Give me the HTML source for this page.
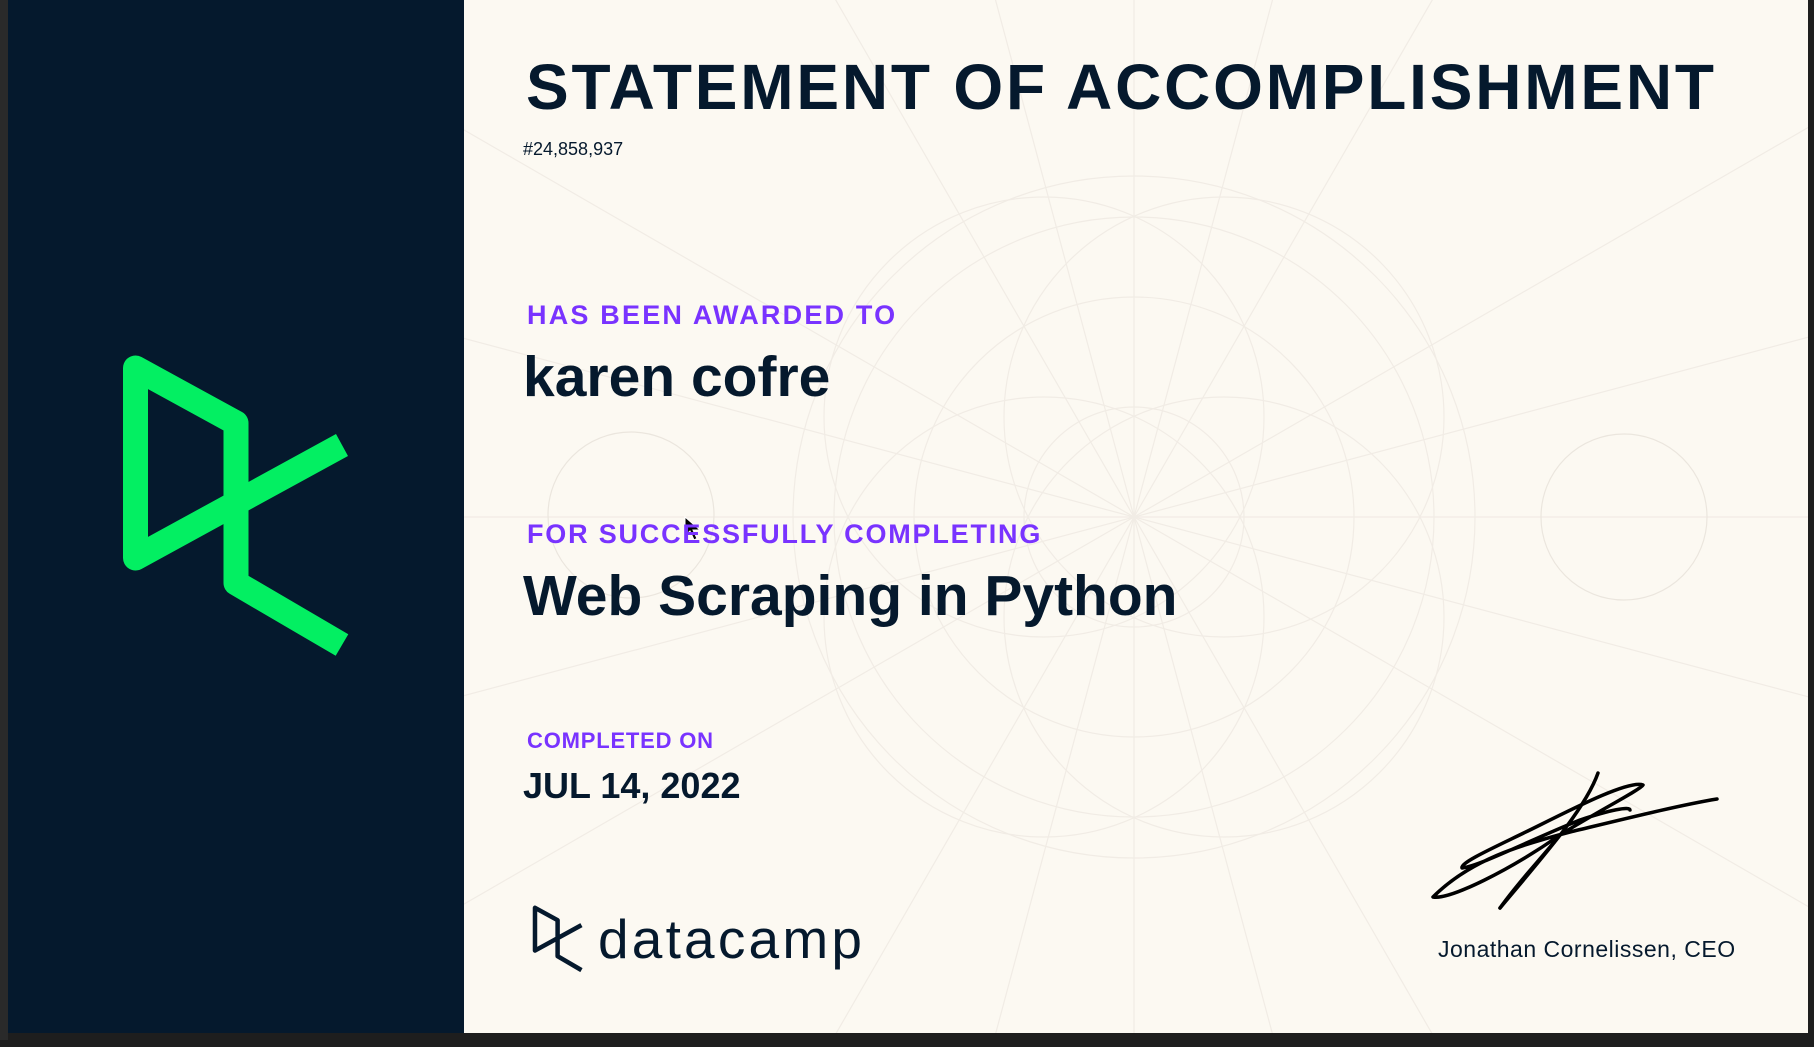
<!DOCTYPE html>
<html><head><meta charset="utf-8"><style>
*{margin:0;padding:0;box-sizing:border-box}
html,body{width:1814px;height:1047px;overflow:hidden}
body{background:#1e1e1e;position:relative;font-family:"Liberation Sans",sans-serif;color:#05192d}
.t{position:absolute;line-height:1;white-space:nowrap}
.b{font-weight:bold}
.p{color:#7933ff;font-weight:bold}
</style></head><body>
<div style="position:absolute;left:0;top:0;width:8px;height:1040px;background:#2a2a2a"></div>
<div style="position:absolute;left:8px;top:0;width:456px;height:1033px;background:#05192d"></div>
<div style="position:absolute;left:464px;top:0;width:1344px;height:1033px;background:#fcf9f2;overflow:hidden">
<svg width="1344" height="1033" style="position:absolute;left:0;top:0" fill="none" stroke="#f1ece5" stroke-width="1.2">
<g transform="translate(670,517)">
<circle r="341"/><circle r="300"/><circle cx="-90" cy="-100" r="220"/><circle cx="90" cy="-100" r="220"/><circle cx="-90" cy="100" r="220"/><circle cx="90" cy="100" r="220"/>
<circle r="220"/><circle r="110"/>
<g>
<line x1="-900" y1="0" x2="900" y2="0"/><line x1="0" y1="-600" x2="0" y2="600"/>
<line x1="-900" y1="-520" x2="900" y2="520"/>
<line x1="-900" y1="520" x2="900" y2="-520"/><line x1="-300" y1="-520" x2="300" y2="520"/><line x1="-300" y1="520" x2="300" y2="-520"/>
<line x1="-150" y1="-560" x2="150" y2="560"/><line x1="-150" y1="560" x2="150" y2="-560"/>
<line x1="-900" y1="-240" x2="900" y2="240"/><line x1="-900" y1="240" x2="900" y2="-240"/>
</g>
</g>
<circle cx="167" cy="515" r="83" stroke="#ebe6de"/><circle cx="1160" cy="517" r="83" stroke="#ebe6de"/>
</svg>
</div>

<svg width="1814" height="1047" style="position:absolute;left:0;top:0">
<path d="M342,445 L135.5,558 L135.5,368 L236,423 L236,583 L342,645" fill="none" stroke="#03ef62" stroke-width="25" stroke-linejoin="round"/>
<g transform="translate(504.5,825) scale(0.225)">
<path d="M342,445 L135.5,558 L135.5,368 L236,423 L236,583 L342,645" fill="none" stroke="#05192d" stroke-width="20" stroke-linejoin="round"/>
</g>
<g fill="none" stroke="#000" stroke-width="3.5" stroke-linecap="round" stroke-linejoin="round">
<path d="M1598,773 C1585,810 1540,860 1500,908"/>
<path d="M1717,799 C1680,805 1620,820 1570,832 C1520,845 1470,860 1433,897 C1450,900 1510,870 1560,835 C1600,810 1640,790 1643,785 C1630,780 1580,805 1540,825 C1500,845 1460,862 1462,868 C1480,866 1530,840 1580,820 C1610,810 1630,806 1630,810"/>
<path d="M1560,835 C1540,860 1520,880 1500,908"/>
</g>
<path d="M685,517 l0,19 l5,-5 l4,9 l3,-1.5 l-4,-8.5 l7,0 z" fill="#000" stroke="#fff" stroke-width="1"/>
</svg>

<div class="t b" style="left:526px;top:55px;font-size:64px;letter-spacing:2.8px">STATEMENT OF ACCOMPLISHMENT</div>
<div class="t" style="left:523px;top:140px;font-size:18px">#24,858,937</div>
<div class="t p" style="left:527px;top:302px;font-size:27px;letter-spacing:2.2px">HAS BEEN AWARDED TO</div>
<div class="t b" style="left:523px;top:349px;font-size:57px">karen cofre</div>
<div class="t p" style="left:527px;top:521px;font-size:27px;letter-spacing:1.8px">FOR SUCCESSFULLY COMPLETING</div>
<div class="t b" style="left:523px;top:568px;font-size:57px">Web Scraping in Python</div>
<div class="t p" style="left:527px;top:730px;font-size:22px;letter-spacing:0.8px">COMPLETED ON</div>
<div class="t b" style="left:523px;top:768px;font-size:36px">JUL 14, 2022</div>
<div class="t" style="left:598px;top:912px;font-size:55px;letter-spacing:3.2px">datacamp</div>
<div class="t" style="left:1438px;top:938px;font-size:23px;letter-spacing:0.5px">Jonathan Cornelissen, CEO</div>
</body></html>
